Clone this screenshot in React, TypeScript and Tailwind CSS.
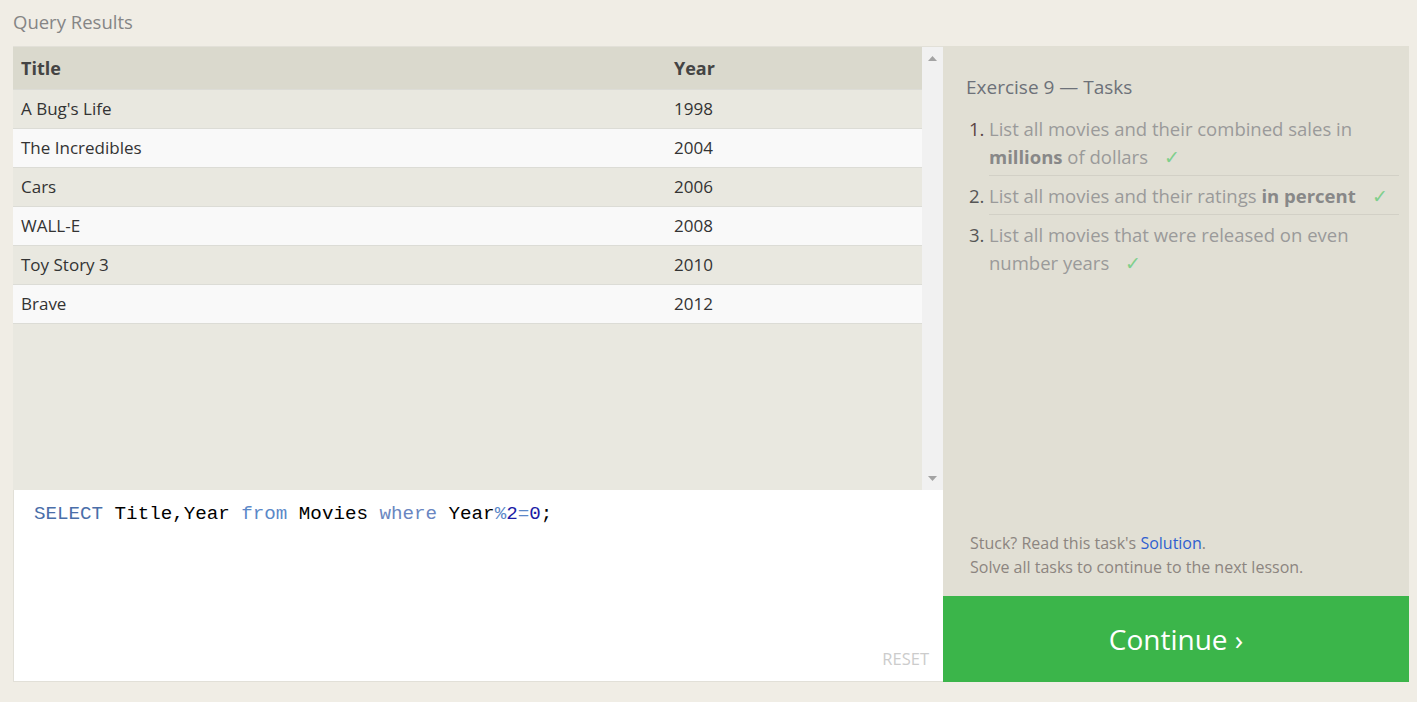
import React from 'react';

const MOVIES = [
  { title: "A Bug's Life", year: 1998 },
  { title: 'The Incredibles', year: 2004 },
  { title: 'Cars', year: 2006 },
  { title: 'WALL-E', year: 2008 },
  { title: 'Toy Story 3', year: 2010 },
  { title: 'Brave', year: 2012 },
];

const font = { fontFamily: '"Open Sans", "Noto Sans", Arial, sans-serif' };

function Check() {
  return <span className="ml-4 inline-block text-[#7fcf8c]">✓</span>;
}

export default function App() {
  return (
    <main className="min-h-screen bg-[#f0ede5] pl-[13px] pr-[8px] pb-5" style={font}>
      <h2 className="h-[46px] pt-[9px] text-[18.5px] leading-[26px] text-[#858585]">Query Results</h2>

      <div className="flex h-[636px]">
        {/* Left: results + editor */}
        <div className="flex w-[930px] shrink-0 flex-col">
          <div className="flex h-[444px] border-t border-[#e2e0d8]">
            <div className="flex-1 bg-[#e9e8e0]">
              <div className="flex h-[42px] items-center bg-[#dad9cd] text-[18px] font-bold text-[#444]">
                <div className="w-[661px] pl-2">Title</div>
                <div>Year</div>
              </div>
              {MOVIES.map((m, i) => (
                <div
                  key={m.title}
                  className={`flex h-[39px] items-center border-t border-[#dcdcd6] text-[17px] text-[#333] ${
                    i % 2 === 0 ? 'bg-[#e9e8e0]' : 'bg-[#f9f9f9]'
                  }`}
                >
                  <div className="w-[661px] pl-2">{m.title}</div>
                  <div>{m.year}</div>
                </div>
              ))}
              <div className="border-t border-[#dcdcd6]" />
            </div>
            {/* scrollbar */}
            <div className="flex w-[21px] flex-col items-center justify-between bg-[#f1f1f1] py-[9px]">
              <svg width="9" height="5" viewBox="0 0 9 5"><path d="M0 5 L4.5 0 L9 5 Z" fill="#a3a3a3" /></svg>
              <svg width="9" height="5" viewBox="0 0 9 5"><path d="M0 0 L4.5 5 L9 0 Z" fill="#a3a3a3" /></svg>
            </div>
          </div>

          <div className="relative flex-1 border-b border-l border-[#e2e0d8] bg-white px-[20px] pt-[11px]">
            <pre
              className="text-[19.2px] leading-[26px] text-black"
              style={{ fontFamily: '"Liberation Mono", "DejaVu Sans Mono", monospace' }}
            >
              <span className="text-[#4a6ea9]">SELECT</span> Title,Year <span className="text-[#5b88c8]">from</span> Movies{' '}
              <span className="text-[#6a86c1]">where</span> Year<span className="text-[#5b88c8]">%</span>
              <span className="text-[#1c1ca6]">2</span>
              <span className="text-[#5b88c8]">=</span>
              <span className="text-[#1c1ca6]">0</span>;
            </pre>
            <span className="absolute right-[14px] bottom-[9px] text-[16.5px] text-[#cccccc]">RESET</span>
          </div>
        </div>

        {/* Right: tasks */}
        <div className="flex w-[466px] shrink-0 flex-col bg-[#e1dfd4]">
          <div className="flex-1 pt-[28px] pl-[23px] pr-[10px]">
            <h3 className="text-[19px] leading-[26px] text-[#6d7179]">Exercise 9 — Tasks</h3>
            <ol className="mt-[15px] text-[18.5px] leading-[28px] text-[#9a9a9a]">
              <li className="flex">
                <span className="w-[23px] shrink-0 pl-[3px] text-[#5a4545]">1.</span>
                <div className="flex-1 border-b border-[#d2d0c6] pb-[4px]">
                  List all movies and their combined sales in <b className="text-[#888]">millions</b> of dollars
                  <Check />
                </div>
              </li>
              <li className="flex pt-[6px]">
                <span className="w-[23px] shrink-0 pl-[3px] text-[#555]">2.</span>
                <div className="flex-1 border-b border-[#d2d0c6] pb-[4px]">
                  List all movies and their ratings <b className="text-[#888]">in percent</b>
                  <Check />
                </div>
              </li>
              <li className="flex pt-[6px]">
                <span className="w-[23px] shrink-0 pl-[3px] text-[#555]">3.</span>
                <div className="flex-1 pr-[40px]">
                  List all movies that were released on even number years
                  <Check />
                </div>
              </li>
            </ol>
          </div>
          <div className="pl-[27px] pb-[17px] text-[16px] leading-[24px] text-[#8c8580]">
            <p>
              Stuck? Read this task's <a className="text-[#2f5fd0]">Solution</a>.
            </p>
            <p>Solve all tasks to continue to the next lesson.</p>
          </div>
          <button className="flex h-[86px] items-center justify-center bg-[#3bb54a] text-[28px] text-white">
            Continue ›
          </button>
        </div>
      </div>
    </main>
  );
}
